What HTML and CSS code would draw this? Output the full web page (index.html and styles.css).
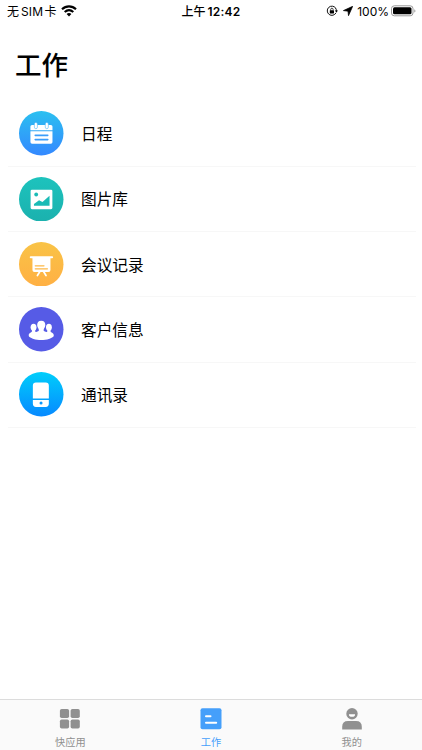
FILE: index.html
```html
<!DOCTYPE html>
<html lang="zh-CN">
<head>
<meta charset="utf-8">
<title>工作</title>
<link rel="stylesheet" href="styles.css">
</head>
<body>
<div class="app">
  <header class="status">
    <div class="status-left">
      <span class="carrier">无<span class="sim">SIM</span>卡</span>
      <svg class="wifi" width="16" height="12" viewBox="0 0 16 12"><g fill="none" stroke="#000" stroke-width="2.1"><path d="M1 4.3C5 .4 11 .4 15 4.3"/><path d="M3.7 7.1c2.6-2.4 6-2.4 8.6 0"/></g><path d="M5.6 9c1.5-1.3 3.3-1.3 4.8 0L8 11.5z"/></svg>
    </div>
    <div class="time">上午<span class="clock">12:42</span></div>
    <div class="status-right">
      <svg width="12" height="12" viewBox="0 0 12 12"><path d="M9.7 3.2A4.6 4.6 0 1 0 10 7.8M9.3 2.7A4.6 4.6 0 0 1 10.4 6" fill="none" stroke="#111" stroke-width="1"/><path d="M8.8 5.6h3.2L10.4 7.6z"/><rect x="3.8" y="5.3" width="4.2" height="3.1" rx=".4"/><path d="M4.7 5.5V4.4a1.2 1.2 0 0 1 2.4 0v1.1" fill="none" stroke="#111" stroke-width=".8"/></svg>
      <svg class="arrow" width="10" height="10" viewBox="0 0 10 10"><path d="M9.7.3 5.5 9.7 5 5.2.4 4.6z" stroke="#000" stroke-width=".7" stroke-linejoin="round"/></svg>
      <span class="percent">100%</span>
      <svg class="battery" width="25" height="12" viewBox="0 0 25 12"><rect x=".5" y=".8" width="21.5" height="10" rx="2.8" fill="#fff" stroke="#999"/><rect x="2" y="2.3" width="18.5" height="7" rx="1.5"/><path d="M23.3 4.2c1.5.5 1.5 2.9 0 3.4z" fill="#999"/></svg>
    </div>
  </header>
  <h1 class="title">工作</h1>
  <ul class="list">
    <li class="row">
      <svg class="icon" viewBox="0 0 44 44"><defs><linearGradient id="g1" x2="0" y2="1"><stop stop-color="#2bc0f0"/><stop offset="1" stop-color="#3488ff"/></linearGradient></defs><circle cx="22" cy="22" r="22" fill="url(#g1)"/><path d="M11.3 19V15.4q0-1.6 1.6-1.6h18.6q1.6 0 1.6 1.6V19zM11.3 20.1h21.8v10.6q0 1.6-1.6 1.6H12.9q-1.6 0-1.6-1.6z" fill="#fff"/><g fill="#fff" stroke="#54b8f7" stroke-width=".6"><rect x="15.2" y="11.3" width="3" height="6.2" rx="1.5"/><rect x="26" y="11.3" width="3" height="6.2" rx="1.5"/></g><path d="M16 24.1h12.5M16 28.3h12.5" stroke="#3b9dfa" stroke-width="1.5" stroke-linecap="round"/></svg>
      <span class="label">日程</span>
    </li>
    <li class="row">
      <svg class="icon" viewBox="0 0 44 44"><defs><linearGradient id="g2" x2="0" y2="1"><stop stop-color="#1dc3bd"/><stop offset="1" stop-color="#1bb1ae"/></linearGradient></defs><circle cx="22" cy="22" r="22" fill="url(#g2)"/><rect x="11.5" y="12.5" width="21.5" height="19.3" rx="1.3" fill="#fff"/><circle cx="17" cy="17.3" r="1.9" fill="#1abbb6"/><path d="M14.8 28.5v-1.7l5-3.9 3.4 1.7 7-6v9.9z" fill="#1abbb6"/></svg>
      <span class="label">图片库</span>
    </li>
    <li class="row">
      <svg class="icon" viewBox="0 0 44 44"><defs><linearGradient id="g3" x2="0" y2="1"><stop stop-color="#f9c346"/><stop offset="1" stop-color="#ffb044"/></linearGradient></defs><circle cx="22" cy="22" r="22" fill="url(#g3)"/><path d="M11.6 15.1h21.2" stroke="#fff" stroke-width="1.9" stroke-linecap="round"/><path d="M13.3 15h17.8v12.7q0 1.9-1.9 1.9h-14q-1.9 0-1.9-1.9z" fill="#fff"/><path d="m20.5 29.5-2.3 3.6m6.2-3.6 2.3 3.6" stroke="#fff" stroke-width="1.7" stroke-linecap="round"/><path d="M16.1 23.6h8.6M16.1 26.5h12" stroke="#fdb846" stroke-width="1.3" stroke-linecap="round"/></svg>
      <span class="label">会议记录</span>
    </li>
    <li class="row">
      <svg class="icon" viewBox="0 0 44 44"><circle cx="22" cy="22" r="22" fill="#565be6"/><g fill="#fff"><ellipse cx="14.4" cy="20" rx="2.9" ry="3.5"/><ellipse cx="29.6" cy="20" rx="2.9" ry="3.5"/><path d="M12.8 22h3.2v2.2l3 2.3v4h-6c-2.5-.2-3.4-1.2-3.4-2.5 0-2.4 3.2-2.8 3.2-4zM31.2 22h-3.2v2.2l-3 2.3v4h6c2.5-.2 3.4-1.2 3.4-2.5 0-2.4-3.2-2.8-3.2-4z"/><path d="M22 13.6c2.8 0 4.3 2 4 4.8-.2 2-1.7 3.2-1.7 4.7 0 2 8.6 1.8 8.6 5.6 0 2.9-5.3 3.9-10.9 3.9s-10.9-1-10.9-3.9c0-3.8 8.6-3.6 8.6-5.6 0-1.5-1.5-2.7-1.7-4.7-.3-2.8 1.2-4.8 4-4.8z"/></g></svg>
      <span class="label">客户信息</span>
    </li>
    <li class="row">
      <svg class="icon" viewBox="0 0 44 44"><defs><linearGradient id="g5" x2="0" y2="1"><stop stop-color="#00cefb"/><stop offset="1" stop-color="#0789ff"/></linearGradient></defs><circle cx="22" cy="22" r="22" fill="url(#g5)"/><path d="M13.7 26.2V13.4q0-3.1 3.1-3.1h9.6q3.1 0 3.1 3.1v12.8zM13.7 27.6h15.8v3.8q0 3.1-3.1 3.1h-9.6q-3.1 0-3.1-3.1z" fill="#fff"/><circle cx="21.8" cy="30.7" r="1.5" fill="#0b98fd"/></svg>
      <span class="label">通讯录</span>
    </li>
  </ul>
  <nav class="tabs">
    <div class="tab">
      <svg class="tab-icon" viewBox="0 0 22 22"><g fill="#909090"><rect x=".9" y="1" width="9.2" height="9" rx="1.8"/><rect x="11.6" y="1" width="9.2" height="9" rx="1.8"/><rect x=".9" y="11.5" width="9.2" height="9" rx="1.8"/><rect x="11.6" y="11.5" width="9.2" height="9" rx="1.8"/></g></svg>
      <span>快应用</span>
    </div>
    <div class="tab active">
      <svg class="tab-icon" viewBox="0 0 22 22"><rect x=".5" y=".2" width="21" height="21" rx="2" fill="#459ffa"/><path d="M6 8.3h4.5M6 14.8h10.2" stroke="#fff" stroke-width="2" stroke-linecap="round"/></svg>
      <span>工作</span>
    </div>
    <div class="tab">
      <svg class="tab-icon" viewBox="0 0 22 22"><circle cx="11" cy="5.7" r="5.7" fill="#909090"/><path d="M7.9 6.2h6.2a3.1 2.6 0 0 1-6.2 0z" fill="#fff"/><path d="M1.2 21.6v-2.8q0-5.8 5.8-5.8h8q5.8 0 5.8 5.8v2.8z" fill="#909090"/></svg>
      <span>我的</span>
    </div>
  </nav>
</div>
</body>
</html>
```
FILE: styles.css
```css
* { box-sizing: border-box; }
body {
  margin: 0;
  background: #fff;
  color: #000;
  font-family: Inter, "Noto Sans CJK SC", sans-serif;
}
.app {
  display: flex;
  flex-direction: column;
  height: 750px;
}
.status {
  display: grid;
  grid-template-columns: 1fr auto 1fr;
  align-items: center;
  height: 22px;
  padding: 0 6px 0 7px;
  font-size: 12px;
  line-height: 22px;
  white-space: nowrap;
}
.status-left, .status-right { display: flex; align-items: center; }
.status-right { justify-content: flex-end; }
.status svg { margin-bottom: 2px; }
.carrier { padding-top: 1px; }
.sim { margin: 0 1.5px 0 2px; letter-spacing: 0.1px; }
.wifi { margin-left: 4px; }
.time { padding-top: 1px; margin-right: 1px; font-weight: 500; }
.clock { margin-left: 2px; font-weight: 600; letter-spacing: 0.2px; }
.arrow { margin: 0 4px 0 5px; }
.percent { font-size: 12px; }
.battery { margin-left: 2px; }
.title {
  margin: 21px 0 0 15px;
  font-size: 26.5px;
  line-height: 44px;
  font-weight: 500;
}
.list {
  margin: 14.5px 6px 0 8px;
  padding: 0;
  list-style: none;
}
.row {
  display: flex;
  align-items: center;
  height: 65.25px;
  padding-left: 11px;
  border-bottom: 1px solid #f7f7f7;
}
.icon { width: 44.5px; height: 44.5px; flex: none; }
.label {
  margin-left: 17.5px;
  padding-top: 3px;
  font-size: 15.7px;
  line-height: 24px;
}
.tabs {
  display: grid;
  grid-template-columns: repeat(3, 1fr);
  height: 51px;
  margin-top: auto;
  border-top: 1px solid #dcdcdc;
  background: #fafafa;
}
.tab {
  display: flex;
  flex-direction: column;
  align-items: center;
  padding-top: 8px;
  color: #909090;
  font-size: 10.2px;
  line-height: 14px;
}
.tab-icon { width: 22px; height: 22px; margin-bottom: 5px; }
.active { color: #459ffa; }
```
